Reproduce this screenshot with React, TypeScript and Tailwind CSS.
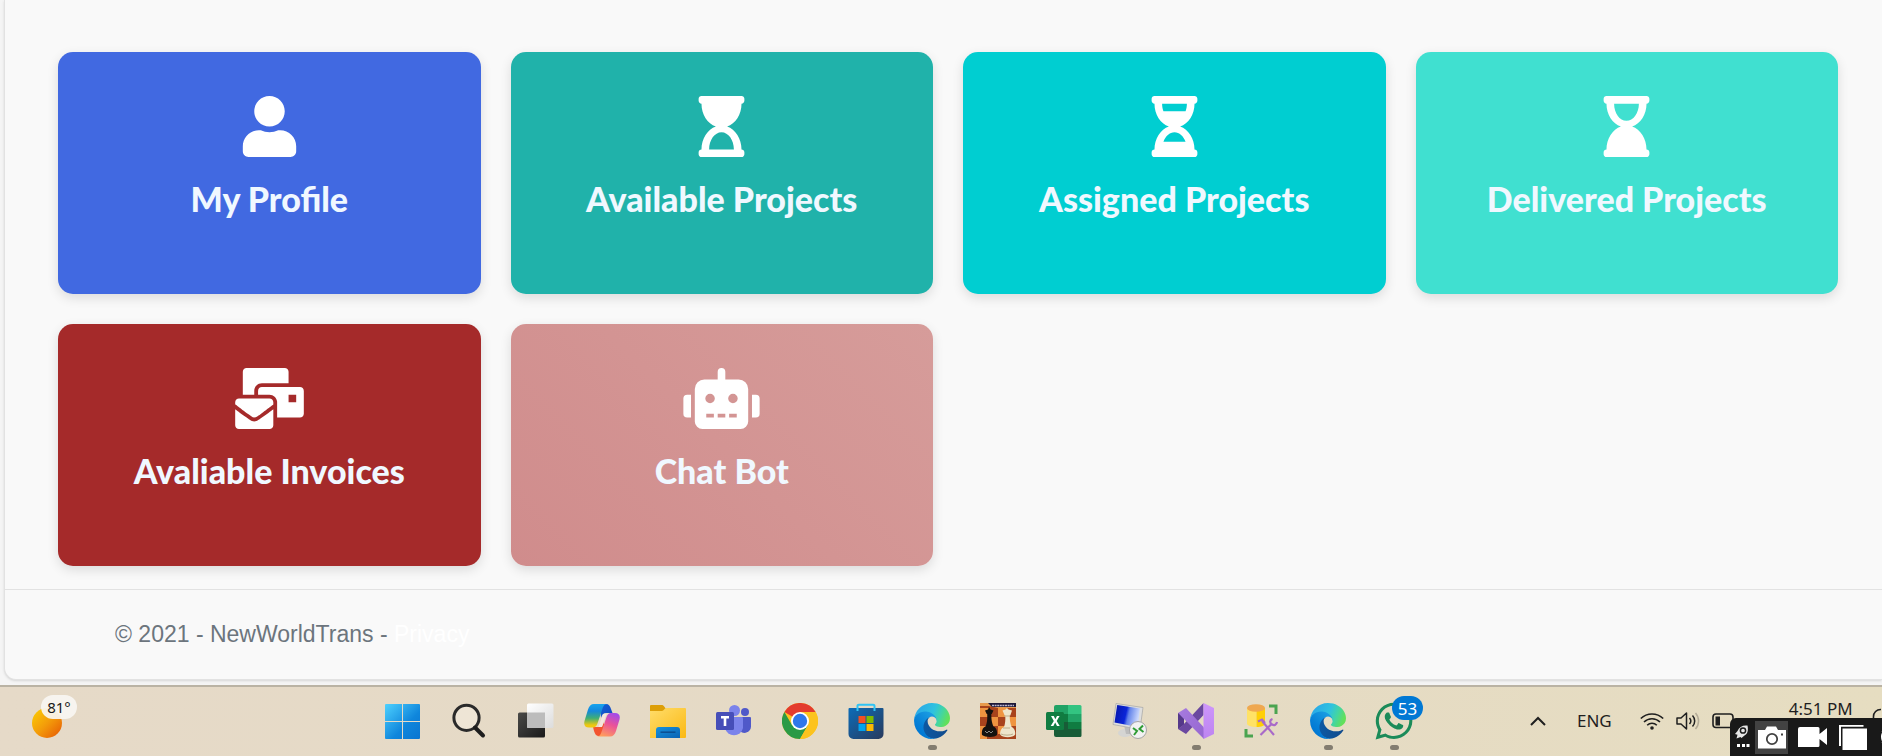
import type { ReactNode } from "react";
import {
  FaHourglassEnd,
  FaHourglassHalf,
  FaHourglassStart,
  FaMailBulk,
  FaRobot,
  FaUser,
  FaWhatsapp,
} from "react-icons/fa";

const tiles = [
  { title: "My Profile", icon: FaUser, color: "bg-[#4169e1]" },
  { title: "Available Projects", icon: FaHourglassStart, color: "bg-[#20b2aa]" },
  { title: "Assigned Projects", icon: FaHourglassHalf, color: "bg-[#00ced1]" },
  { title: "Delivered Projects", icon: FaHourglassEnd, color: "bg-[#40e0d0]" },
  { title: "Avaliable Invoices", icon: FaMailBulk, color: "bg-[#a52a2a]" },
  { title: "Chat Bot", icon: FaRobot, color: "bg-linear-45 from-[#d08c8c] to-[#d69c9a]" },
];

function Icon({ children }: { children: ReactNode }) {
  return (
    <svg viewBox="0 0 36 36" className="size-9" aria-hidden="true">
      {children}
    </svg>
  );
}

function StartIcon() {
  return (
    <svg viewBox="1 0 36 36" className="size-9 overflow-visible" aria-hidden="true">
      <defs>
        <linearGradient id="start" x1="0" y1="0" x2="36" y2="36" gradientUnits="userSpaceOnUse">
          <stop offset="0" stopColor="#4fd3ff" />
          <stop offset="0.6" stopColor="#0f86dc" />
          <stop offset="1" stopColor="#0a74d0" />
        </linearGradient>
      </defs>
      <path
        fill="url(#start)"
        d="M1 1H17V18H0V2a1 1 0 0 1 1-1zM18 1h16a1 1 0 0 1 1 1v16H18zM0 19H17V36H1a1 1 0 0 1-1-1zM18 19H35v16a1 1 0 0 1-1 1H18z"
      />
    </svg>
  );
}

function SearchIcon() {
  return (
    <Icon>
      <circle cx="14.500" cy="14.800" r="12.600" fill="#f3ece0" fillOpacity="0.6" stroke="#2a2a2a" strokeWidth="3" />
      <path d="M23 24.500l8 8" stroke="#1d1d1d" strokeWidth="4" strokeLinecap="round" />
    </Icon>
  );
}

function TaskViewIcon() {
  return (
    <Icon>
      <defs>
        <linearGradient id="tvDark" x1="0" y1="0" x2="1" y2="1">
          <stop offset="0" stopColor="#4a4a48" />
          <stop offset="1" stopColor="#1a1a1a" />
        </linearGradient>
        <linearGradient id="tvLight" x1="0" y1="0" x2="1" y2="1">
          <stop offset="0" stopColor="#fff" />
          <stop offset="1" stopColor="#dcdcdc" />
        </linearGradient>
      </defs>
      <rect x="0" y="9.500" width="27" height="25" rx="1.500" fill="url(#tvDark)" />
      <rect x="9" y="0.500" width="26.500" height="24.500" rx="1.500" fill="url(#tvLight)" />
      <path d="M9 9.500h18V25H10.500A1.500 1.500 0 0 1 9 23.500z" fill="#bcbcbc" />
    </Icon>
  );
}

function CopilotIcon() {
  return (
    <Icon>
      <defs>
        <linearGradient id="cpA" x1="0" y1="0" x2="0" y2="1">
          <stop offset="0" stopColor="#18a4ee" />
          <stop offset="0.3" stopColor="#1588dc" />
          <stop offset="0.6" stopColor="#3fae75" />
          <stop offset="0.9" stopColor="#efc810" />
        </linearGradient>
        <linearGradient id="cpB" x1="0.7" y1="0" x2="0.3" y2="1">
          <stop offset="0" stopColor="#a34be8" />
          <stop offset="0.45" stopColor="#ea5299" />
          <stop offset="1" stopColor="#ff9d5c" />
        </linearGradient>
        <linearGradient id="cpC" x1="0" y1="0" x2="1" y2="1">
          <stop offset="0" stopColor="#0e62d6" />
          <stop offset="1" stopColor="#1746c0" />
        </linearGradient>
      </defs>
      <path d="M16 1h6c3 0 4 2 5 5l1.500 4H22c-3 0-4 2-5 5z" fill="url(#cpC)" />
      <path d="M20 33h-5c-3 0-4-2-5-5l-1-4h6c3 0 4-2 5-5z" fill="#f3542f" />
      <path d="M10 1h13c-3 0-4 3-5 6l-4 12c-1 3-2 5.500-5 5.500H5C1 24.500-.5 22 .5 18L4 6.500C5 3 7 1 10 1z" fill="url(#cpA)" />
      <path d="M26 33.500H13c3 0 4-3 5-6l4-12c1-3 2-5.500 5-5.500h4c4 0 5.500 2.500 4.500 6.500L32 28c-1 3.500-3 5.500-6 5.500z" fill="url(#cpB)" />
      <path d="M19 11h3.500l-4.500 13h-3.500z" fill="#f5e6df" />
    </Icon>
  );
}

function FolderIcon() {
  return (
    <Icon>
      <defs>
        <linearGradient id="folder" x1="0" y1="0" x2="1" y2="1">
          <stop offset="0" stopColor="#ffdd6b" />
          <stop offset="1" stopColor="#fbb914" />
        </linearGradient>
        <linearGradient id="folderTab" x1="0" y1="0" x2="1" y2="1">
          <stop offset="0" stopColor="#1792dc" />
          <stop offset="1" stopColor="#0a62b4" />
        </linearGradient>
      </defs>
      <path d="M0 3a1 1 0 0 1 1-1h10.500c1 0 2 .5 2.500 1.200L16 6v6H0z" fill="#dd9f08" />
      <path d="M0 8h11.500c1 0 1.800-.4 2.500-1.200C14.800 5.500 15.500 5 17 5h18a1 1 0 0 1 1 1v28a1 1 0 0 1-1 1H0z" fill="url(#folder)" />
      <path d="M6 35V27a3 3 0 0 1 3-3h18a3 3 0 0 1 3 3v8z" fill="url(#folderTab)" />
      <path d="M10.500 29.200h15" stroke="#0b4d91" strokeWidth="1.500" />
    </Icon>
  );
}

function TeamsIcon() {
  return (
    <Icon>
      <circle cx="29" cy="9" r="4" fill="#5059c9" />
      <circle cx="18.500" cy="7.500" r="5.500" fill="#7b83eb" />
      <path d="M23 14h11a1 1 0 0 1 1 1v8.500a6.500 6.500 0 0 1-11 4.500z" fill="#5059c9" />
      <path d="M9 14h16.500c1 0 1.500.5 1.500 1.500V25a9.200 9.200 0 0 1-18 0z" fill="#7b83eb" />
      <rect x="0" y="9" width="18" height="18" rx="1.500" fill="#464eb8" />
      <path d="M5 13h8v2.500h-2.700V23H7.700v-7.500H5z" fill="#fff" />
    </Icon>
  );
}

function ChromeIcon() {
  return (
    <Icon>
      <circle cx="18" cy="18" r="18" fill="#fcc31e" />
      <path d="M18 18L2.400 9A18 18 0 0 1 33.600 9H18z" fill="#e33b2e" />
      <path d="M2.400 9A18 18 0 0 0 18 36l7.800-13.500L18 18l-7.800 4.500z" fill="#2a9a46" />
      <path d="M18 9h15.600A18 18 0 0 1 18 36l7.800-13.500z" fill="#fcc31e" />
      <circle cx="18" cy="18" r="9" fill="#fff" />
      <circle cx="18" cy="18" r="7.200" fill="#2f77ea" />
    </Icon>
  );
}

function StoreIcon() {
  return (
    <Icon>
      <defs>
        <linearGradient id="store" x1="0" y1="0" x2="1" y2="1">
          <stop offset="0" stopColor="#0c6cb8" />
          <stop offset="1" stopColor="#293a5c" />
        </linearGradient>
      </defs>
      <path d="M0.500 6a1 1 0 0 1 1-1h33a1 1 0 0 1 1 1v25a5 5 0 0 1-5 5h-25a5 5 0 0 1-5-5z" fill="url(#store)" />
      <path d="M9.500 8V3a1.300 1.300 0 0 1 1.300-1.300h14.400A1.300 1.300 0 0 1 26.500 3v5" fill="none" stroke="#2fc4f5" strokeWidth="2" />
      <path d="M10.500 13h7v7h-7z" fill="#f25022" />
      <path d="M18.500 13h7v7h-7z" fill="#7fba00" />
      <path d="M10.500 21h7v7h-7z" fill="#00a4ef" />
      <path d="M18.500 21h7v7h-7z" fill="#ffb900" />
    </Icon>
  );
}

function EdgeIcon() {
  return (
    <svg viewBox="0 0 256 256" className="size-9" aria-hidden="true">
      <defs>
        <linearGradient id="edgeA" x1="60" y1="178" x2="241" y2="178" gradientUnits="userSpaceOnUse">
          <stop offset="0" stopColor="#0c59a4" />
          <stop offset="1" stopColor="#114a8b" />
        </linearGradient>
        <linearGradient id="edgeB" x1="157" y1="100" x2="46" y2="221" gradientUnits="userSpaceOnUse">
          <stop offset="0" stopColor="#1b9de2" />
          <stop offset="0.2" stopColor="#1595df" />
          <stop offset="0.7" stopColor="#0680d7" />
          <stop offset="1" stopColor="#0078d4" />
        </linearGradient>
        <linearGradient id="edgeC" x1="20" y1="40" x2="235" y2="130" gradientUnits="userSpaceOnUse">
          <stop offset="0" stopColor="#2aa9e8" />
          <stop offset="0.5" stopColor="#2fc2df" />
          <stop offset="0.75" stopColor="#43d5a3" />
          <stop offset="1" stopColor="#62e05a" />
        </linearGradient>
      </defs>
      <path
        fill="url(#edgeA)"
        d="M231 190.500c-3.400 1.800-6.900 3.400-10.500 4.700a101.600 101.600 0 0 1-35.700 6.400c-47 0-88-32.400-88-74 .1-11.300 6.400-21.700 16.300-27.100-42.600 1.800-53.500 46.100-53.500 72.100 0 73.500 67.800 81 82.400 81 7.900 0 19.800-2.300 26.900-4.600l1.300-.4a128.300 128.300 0 0 0 66.600-52.800 4 4 0 0 0-5.700-5.500z"
      />
      <path
        fill="url(#edgeB)"
        d="M105.700 241.400a79.200 79.200 0 0 1-22.700-21.400 80.700 80.700 0 0 1 29.600-120.500c3.200-1.500 8.600-4.100 15.700-4a32.400 32.400 0 0 1 25.700 13 31.800 31.800 0 0 1 6.300 18.700c0-.2 24.500-79.600-80-79.600-43.900 0-80 41.600-80 78.200a130.200 130.200 0 0 0 12.100 56 128 128 0 0 0 156.400 67.100 75.500 75.500 0 0 1-62.800-8z"
      />
      <path
        fill="url(#edgeC)"
        d="M152.300 148.900c-.9 1-3.400 2.500-3.400 5.600 0 2.600 1.700 5.200 4.800 7.300 14.300 10 41.400 8.600 41.500 8.600a59.600 59.600 0 0 0 30.300-8.300 61.400 61.400 0 0 0 30.400-52.900c.3-22.400-8-37.300-11.300-43.900C223.500 23.900 177.700 0 128 0 57.500 0 .9 56.700.5 127.100.9 90.600 37.300 61 80.500 61c3.500 0 23.500.3 42 10.100 16.400 8.600 24.900 19 30.900 29.200 6.200 10.600 7.300 24 7.300 29.400s-2.700 13.300-7.800 19.200z"
      />
    </svg>
  );
}

function ChessIcon() {
  return (
    <Icon>
      <rect width="36" height="36" fill="#a8431c" />
      <path d="M0 5h9v9H0zM18 5h9v9h-9zM9 14h9v9H9zM27 14h9v9h-9zM0 23h7v13H0zM18 23h8v8h-8z" fill="#ef9440" />
      <path d="M0 0h36v5H18L9 3H0z" fill="#e79a4c" />
      <path d="M8 0h28v4H12z" fill="#1d1838" />
      <path d="M12 2.500h22" stroke="#b9b4cf" strokeWidth="1.500" strokeDasharray="2 .6" />
      <path d="M9 4l1.500 2.500 3 1-1.700 3.500h-.5c0 6 .7 9 2.200 12.500 3 1 4 5 3.500 8.500-2 2.500-12 2.500-15 0-.5-4 .5-7.500 3.500-8.500C7 20 7.500 17 7.200 11h-.5L5 7.500l3-1z" fill="#15120f" />
      <path d="M5 28l2 2 2-2 2 2 2-2" stroke="#8c8a86" fill="none" />
      <path d="M27 5l1.500 1.500 3.500 1-1.700 5h-.6c0 5 .6 8 2 11.500 2.500 1 4 4.500 3.500 7.500-2 3.500-13 3.500-15 0-.3-3 1-6.500 3.800-7.500 1.200-3.500 1.500-6.500 1.300-11.500h-.6L22.500 7.500l3-1z" fill="#eee5cb" />
      <path d="M23 25h7M24 13h6M21 31c3 1.500 9 1.500 12 0" stroke="#bdae8b" fill="none" />
    </Icon>
  );
}

function ExcelIcon() {
  return (
    <Icon>
      <path d="M8 4a2 2 0 0 1 2-2h12v9H8z" fill="#21a366" />
      <path d="M22 2h12a1.500 1.500 0 0 1 1.500 1.500V11H22z" fill="#33c481" />
      <path d="M8 11h14v8H8z" fill="#107c41" />
      <path d="M22 11h13.500v8H22z" fill="#21a366" />
      <path d="M22 19h13.500v7H22z" fill="#107c41" />
      <path d="M8 19h14v7h13.500v6.500A1.500 1.500 0 0 1 34 34H10a2 2 0 0 1-2-2z" fill="#185c37" />
      <rect x="0" y="9" width="18" height="18" rx="1.500" fill="#107c41" />
      <path d="M5 13h2.800l1.500 3.300L11 13h2.600l-2.900 5 3 5H11l-1.800-3.400L7.400 23H4.700l3.100-5z" fill="#fff" />
    </Icon>
  );
}

function RemoteDesktopIcon() {
  return (
    <Icon>
      <defs>
        <linearGradient id="screen" x1="0" y1="0" x2="1" y2="0.2">
          <stop offset="0" stopColor="#0715a8" />
          <stop offset="0.5" stopColor="#0a25d8" />
          <stop offset="0.62" stopColor="#6484ea" />
          <stop offset="1" stopColor="#c8d6fd" />
        </linearGradient>
      </defs>
      <ellipse cx="13" cy="30" rx="7" ry="4" fill="#d5d5d3" />
      <path d="M12 22l8 2v7h-6z" fill="#bcbcbc" />
      <path d="M4 .5l27 4-3 22L1 21.500z" fill="#dedede" stroke="#a5a5a5" strokeWidth=".7" />
      <path d="M5.200 2l22.800 3.500-2.500 18.500L2.500 19.500z" fill="url(#screen)" />
      <circle cx="26" cy="27" r="8.500" fill="#f1f1f1" stroke="#a5a5a5" />
      <path d="M21 25l4 3-3 4M31 22.500l-3.500 3.500 4 3" fill="none" stroke="#2f9c35" strokeWidth="2" />
    </Icon>
  );
}

function VisualStudioIcon() {
  return (
    <Icon>
      <defs>
        <linearGradient id="vsRight" x1="0" y1="0" x2="0" y2="1">
          <stop offset="0" stopColor="#ce96fb" />
          <stop offset="1" stopColor="#bd84f0" />
        </linearGradient>
        <linearGradient id="vsBand" x1="0" y1="0" x2="1" y2="1">
          <stop offset="0" stopColor="#a77be0" />
          <stop offset="1" stopColor="#9566cf" />
        </linearGradient>
      </defs>
      <path d="M0 10l6 4v8l-6 4z" fill="#55398a" />
      <path d="M25.500 0v12L8 31l-8-5 5-4z" fill="#6b48a0" />
      <path d="M0 10l8-5 18 19.500V36z" fill="url(#vsBand)" />
      <path d="M0 10l5.500 6.500v3L0 26z" fill="#55398a" />
      <path d="M25.500 0L36 5v26l-10.500 5z" fill="url(#vsRight)" />
    </Icon>
  );
}

function DatabaseToolsIcon() {
  return (
    <Icon>
      <path d="M25 3h7v8M2 26v7h7" fill="none" stroke="#4ba450" strokeWidth="3" />
      <path d="M3 5h9.500v19C7 24 3 22.500 3 20.500z" fill="#ffe266" />
      <path d="M12.500 5H21v15.500c0 2-3.500 3.500-8.500 3.500z" fill="#ffcf05" />
      <ellipse cx="12" cy="5" rx="9" ry="3.800" fill="#efa850" />
      <path d="M14 18.500l4-2 3 3.500M18 18l12 14M16.500 32L28 20.500" fill="none" stroke="#a96ac9" strokeWidth="2.200" />
      <path d="M28.500 16c-3 1-3 4-.5 5.500s4.500 0 5-2.500" fill="none" stroke="#a96ac9" strokeWidth="2.200" />
    </Icon>
  );
}

function WhatsAppIcon() {
  return (
    <span className="relative block">
      <FaWhatsapp className="-m-[3px] size-[42px] text-[#1b8b59]" />
      <span className="absolute -top-[7px] left-4 flex h-6 w-[31px] items-center justify-center rounded-full bg-[#0078d4] text-[17px] leading-none text-white">
        53
      </span>
    </span>
  );
}

const apps = [
  { name: "Start", icon: StartIcon },
  { name: "Search", icon: SearchIcon },
  { name: "Task View", icon: TaskViewIcon },
  { name: "Copilot", icon: CopilotIcon },
  { name: "File Explorer", icon: FolderIcon },
  { name: "Teams", icon: TeamsIcon },
  { name: "Chrome", icon: ChromeIcon },
  { name: "Store", icon: StoreIcon },
  { name: "Edge", icon: EdgeIcon, running: true },
  { name: "Chess", icon: ChessIcon },
  { name: "Excel", icon: ExcelIcon },
  { name: "Remote Desktop", icon: RemoteDesktopIcon },
  { name: "Visual Studio", icon: VisualStudioIcon, running: true },
  { name: "Database Tools", icon: DatabaseToolsIcon },
  { name: "Edge, second profile", icon: EdgeIcon, running: true },
  { name: "WhatsApp", icon: WhatsAppIcon, running: true },
];

function Tray() {
  return (
    <div className="flex h-9 flex-1 items-center text-[#1f1f1f]">
      <button type="button" aria-label="Show hidden icons" className="ml-[118px]">
        <svg viewBox="0 0 16 10" className="h-[10px] w-4" fill="none" stroke="currentColor" strokeWidth="2">
          <path d="M1 9l7-7 7 7" />
        </svg>
      </button>
      <button type="button" className="ml-[31px] text-[17px]">
        ENG
      </button>
      <button type="button" aria-label="Network, volume and battery" className="ml-7 flex items-center gap-3">
        <svg viewBox="0 0 24 18" className="h-[18px] w-6" fill="none" stroke="currentColor" strokeWidth="1.600">
          <path d="M.8 6.500a16 16 0 0 1 22.400 0M4 10a11.300 11.300 0 0 1 16 0M7.200 13.300a6.800 6.800 0 0 1 9.600 0" />
          <circle cx="12" cy="16" r="1.800" fill="currentColor" stroke="none" />
        </svg>
        <svg viewBox="0 0 24 20" className="h-5 w-6" fill="none" stroke="currentColor" strokeWidth="1.500">
          <path d="M1 7h4l5.500-5v16L5 13H1z" strokeLinejoin="round" />
          <path d="M13.500 7a4.500 4.500 0 0 1 0 6M16.500 4.500a8 8 0 0 1 0 11" />
          <path d="M19.500 2a12 12 0 0 1 0 16" stroke="#b3ab97" />
        </svg>
        <svg viewBox="0 0 26 16" className="h-4 w-[26px]" fill="none" stroke="currentColor" strokeWidth="1.600">
          <rect x="1" y="1" width="20" height="13.500" rx="3" />
          <rect x="3.500" y="3.500" width="4.500" height="9" fill="currentColor" stroke="none" />
        </svg>
      </button>
      <time className="mb-6 ml-[51px] text-[17px] whitespace-nowrap">4:51 PM</time>
      <button type="button" aria-label="Notifications" className="mb-1 ml-4 w-3 overflow-hidden">
        <svg viewBox="0 0 22 24" className="h-6 w-[22px]" fill="none" stroke="currentColor" strokeWidth="1.600">
          <path d="M2.500 17.500c2-2 2-3 2-8a7 7 0 0 1 14 0c0 5 0 6 2 8z" />
        </svg>
      </button>
    </div>
  );
}

function CaptureBar() {
  return (
    <div className="absolute right-0 bottom-0 flex h-[38px] w-[152px] items-center overflow-hidden rounded-tl-md bg-[#191919]">
      <button type="button" aria-label="Launcher" className="w-[25px] shrink-0">
        <svg viewBox="0 0 25 37" className="h-[37px] w-[25px]">
          <path d="M17.500 6.500c-5-.5-8.500 1.500-10 5.500L5 15l2.500.8-1 3.700 4-1.500 1 1 3-2.500c3-1.500 4-5 3-10z" fill="#e6e6e6" />
          <circle cx="13" cy="11.500" r="2.600" fill="#e6e6e6" stroke="#191919" strokeWidth="1.500" />
          <path d="M7 25h3v3H7zM12 25h3v3h-3zM16.500 25h3v3h-3z" fill="#fff" />
        </svg>
      </button>
      <button type="button" aria-label="Take picture" className="flex h-[33px] w-[33px] shrink-0 items-center justify-center bg-[#424242]">
        <svg viewBox="0 0 28 23" className="h-[23px] w-7">
          <path d="M0 4h7l2-3.500h9L20 4h8v18.500H0z" fill="#fff" />
          <circle cx="14" cy="13" r="5.200" fill="#fff" stroke="#424242" strokeWidth="1.800" />
          <rect x="23" y="7.500" width="2" height="2" fill="#424242" />
        </svg>
      </button>
      <button type="button" aria-label="Record video" className="ml-[10px] shrink-0">
        <svg viewBox="0 0 29 20" className="h-5 w-[29px]" fill="#fff">
          <path d="M0 2a2 2 0 0 1 2-2h18a1.500 1.500 0 0 1 1.500 1.500V7L29 1v17l-7.500-6v6.500A1.500 1.500 0 0 1 20 20H0z" />
        </svg>
      </button>
      <button type="button" aria-label="Gallery" className="ml-3 shrink-0">
        <svg viewBox="0 0 28 25" className="h-[25px] w-7" fill="#fff">
          <path d="M0 0h24.500v1.800H2V21H0z" />
          <path d="M3.500 3.500H28V25H3.500z" />
        </svg>
      </button>
      <button type="button" aria-label="Capture settings" className="ml-3 shrink-0">
        <svg viewBox="0 0 24 24" className="size-6" fill="none" stroke="#fff" strokeWidth="4">
          <circle cx="12" cy="12" r="8" />
          <path d="M4 5l4 4M16 16l4 4M4 19l4-4" />
        </svg>
      </button>
    </div>
  );
}

function Taskbar() {
  return (
    <nav
      aria-label="Taskbar"
      className="relative flex h-[71px] shrink-0 items-start overflow-hidden border-t-2 border-[#bab3a4] bg-linear-to-r from-[#e6dac8] via-[#e5dac5] to-[#e6ddc1] pt-4 font-['Noto_Sans',sans-serif]"
    >
      <button type="button" aria-label="Weather, 81°" className="relative ml-8 flex h-9 w-[46px] shrink-0 items-end pb-1">
        <span className="mb-[-3px] size-[30px] rounded-full bg-linear-to-br from-[#fbd000] via-[#f39c0a] to-[#e35205]" />
        <span className="absolute -top-2 left-[9px] flex h-6 w-9 items-center justify-center rounded-full bg-[#f8f6f2]/92 text-[15px] leading-none text-[#1a1a1a]">
          81°
        </span>
      </button>
      <ul className="ml-[308px] flex gap-[30px]">
        {apps.map(({ name, icon: AppIcon, running }) => (
          <li key={name} className="w-9">
            <button type="button" aria-label={name} className="flex flex-col items-center gap-[6px]">
              <AppIcon />
              {running && <span className="h-[5px] w-[9px] rounded-full bg-[#837d70]" />}
            </button>
          </li>
        ))}
      </ul>
      <Tray />
      <CaptureBar />
    </nav>
  );
}

export default function App() {
  return (
    <div className="flex min-h-screen flex-col bg-[#f5f5f5]">
      <div className="mb-[5px] ml-1 flex flex-1 flex-col overflow-hidden rounded-bl-xl border-b border-l border-[#e2e2e2] bg-[#f9f9f9] shadow-sm">
        <main className="grid grid-cols-4 gap-[30px] pt-[52px] pr-11 pb-[23px] pl-[53px]">
          {tiles.map(({ title, icon: TileIcon, color }) => (
            <a
              key={title}
              href="#"
              className={`flex h-[242px] flex-col items-center rounded-[15px] pt-11 shadow-[0_4px_12px_rgba(0,0,0,0.12)] ${color}`}
            >
              <TileIcon className="h-[61px] w-[77px] text-white" />
              <h2 className="mt-[22px] font-['Lato_Black',Lato,sans-serif] text-[34px] leading-10 font-black text-[#f0f8ff]">
                {title}
              </h2>
            </a>
          ))}
        </main>
        <footer className="flex flex-1 items-center border-t border-[#e2e2e2] px-[110px] font-['Liberation_Sans',Arial,sans-serif] text-[23px] text-[#6c757d]">
          <p>
            © 2021 - NewWorldTrans -{" "}
            <a href="#" className="text-white">
              Privacy
            </a>
          </p>
        </footer>
      </div>
      <Taskbar />
    </div>
  );
}
